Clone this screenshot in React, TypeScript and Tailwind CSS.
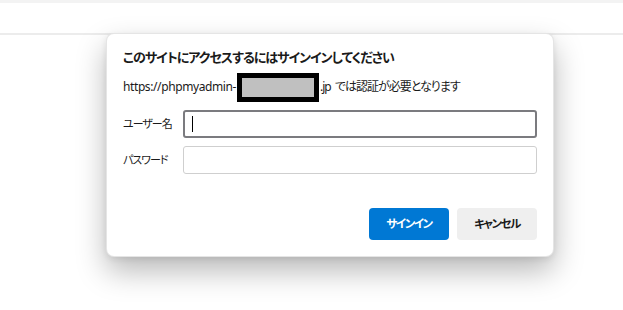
import React from 'react'

const jp = "font-['Noto_Sans','Noto_Sans_CJK_JP',sans-serif] [font-feature-settings:'palt']"

export default function App() {
    return (
        <div className={`relative w-[623px] h-[310px] bg-white overflow-hidden ${jp}`}>
            {/* browser chrome behind the prompt */}
            <div className="h-[3px] bg-[#f3f3f3]" />
            <div className="h-[30px] bg-white" />
            <div className="h-[2px] bg-[#ececec]" />

            {/* auth dialog */}
            <div className="absolute left-[106px] top-[33px] w-[448px] rounded-[8px] border border-black/10 bg-white px-[16px] pt-[13px] pb-[16px] shadow-[0_14px_30px_rgba(0,0,0,0.28),0_2px_6px_rgba(0,0,0,0.08)]">
                <h1 className="h-[20px] text-[13px] leading-[20px] font-semibold tracking-[-1px] text-[#1a1a1a]">
                    このサイトにアクセスするにはサインインしてください
                </h1>

                <div className="mt-[10px] flex h-[20px] items-center text-[12px] text-[#1a1a1a]">
                    <span className="tracking-[-0.4px]">https://phpmyadmin-</span>
                    <span className="ml-[1px] h-[29px] w-[82px] shrink-0 border-[5px] border-black bg-[#c0c0c0]" />
                    <span className="ml-[1px] tracking-[-1px]">.jp&nbsp; では認証が必要となります</span>
                </div>

                <div className="mt-[13px] flex items-center">
                    <label className="w-[60px] shrink-0 text-[11px] tracking-[-1px] text-[#1a1a1a]">ユーザー名</label>
                    <div className="flex h-[28px] flex-1 items-center rounded-[3px] border-2 border-[#7b7b7f] px-[7px]">
                        <span className="h-[16px] w-px bg-black" />
                    </div>
                </div>

                <div className="mt-[8px] flex items-center">
                    <label className="w-[60px] shrink-0 text-[11px] tracking-[-1px] text-[#1a1a1a]">パスワード</label>
                    <input type="password" className="h-[28px] flex-1 rounded-[3px] border border-[#cfcfcf] px-[7px] outline-none" />
                </div>

                <div className="mt-[34px] flex justify-end gap-[8px]">
                    <button className="h-[32px] w-[80px] rounded-[4px] bg-[#0078d4] text-[11.5px] font-bold tracking-[-1.5px] text-white">
                        サインイン
                    </button>
                    <button className="h-[32px] w-[80px] rounded-[4px] bg-[#efefef] text-[11.5px] font-bold tracking-[-1.5px] text-[#1a1a1a]">
                        キャンセル
                    </button>
                </div>
            </div>
        </div>
    )
}
